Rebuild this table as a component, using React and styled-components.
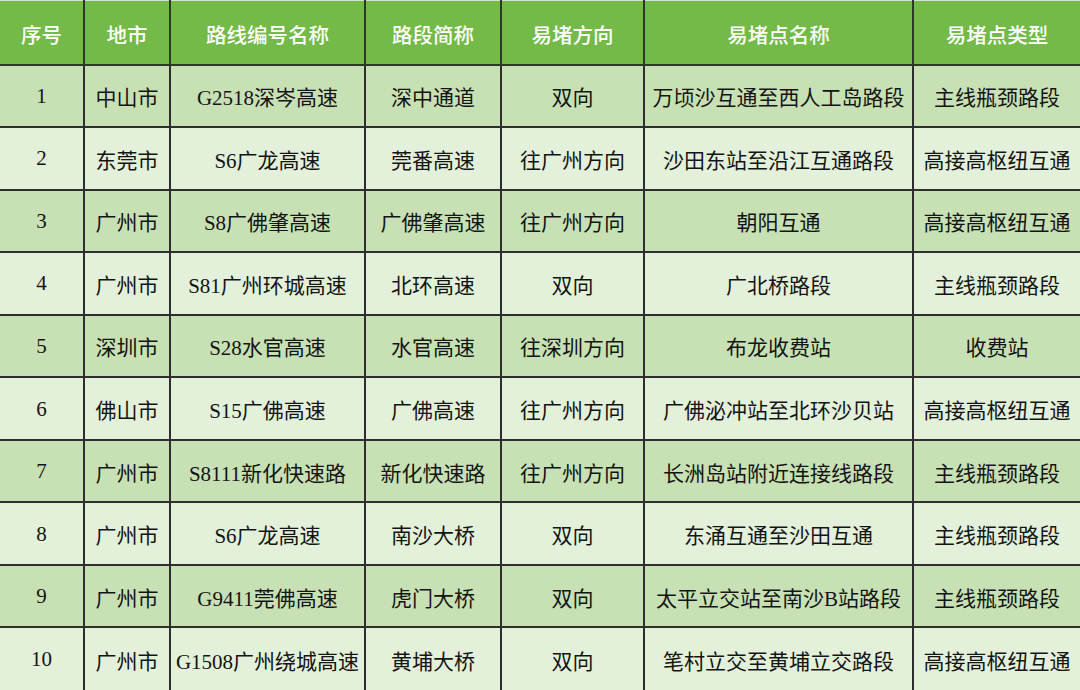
import React from "react";
import styled, { createGlobalStyle } from "styled-components";

const Global = createGlobalStyle`
  html, body { margin: 0; padding: 0; background: #ffffff; }
  body { font-family: "Liberation Serif", "Noto Sans CJK SC", serif; }
`;

const Table = styled.table`
  width: 1080px;
  height: 690px;
  table-layout: fixed;
  border-collapse: collapse;
  border-spacing: 0;
  border-top: 1px solid #d7dfd0;
  font-family: "Liberation Serif", "Noto Sans CJK SC", serif;
`;

const HeadRow = styled.tr`
  height: 64px;
  background: #73ba48;
`;

const HeadCell = styled.th`
  padding: 3px 0 0;
  color: #ffffff;
  font-size: 20.5px;
  font-weight: 500;
  text-align: center;
  vertical-align: middle;
  border-right: 2px solid #2c3a25;
  border-bottom: 2px solid #2c3a25;
  &:last-child { border-right: none; }
`;

const Row = styled.tr`
  height: 62.5px;
  background: ${(p) => (p.$odd ? "#c7e1b4" : "#e3f0da")};
  &:last-child td { border-bottom: none; }
`;

const Cell = styled.td`
  padding: 1px 0 0;
  color: #141414;
  font-size: 21px;
  text-align: center;
  vertical-align: middle;
  white-space: nowrap;
  border-right: 2px solid #2e2e2e;
  border-bottom: 2px solid #2e2e2e;
  &:last-child { border-right: none; }
`;

const widths = [84, 86, 195, 136, 143, 269, 167];
const headers = ["序号", "地市", "路线编号名称", "路段简称", "易堵方向", "易堵点名称", "易堵点类型"];

const rows = [
  ["1", "中山市", "G2518深岑高速", "深中通道", "双向", "万顷沙互通至西人工岛路段", "主线瓶颈路段"],
  ["2", "东莞市", "S6广龙高速", "莞番高速", "往广州方向", "沙田东站至沿江互通路段", "高接高枢纽互通"],
  ["3", "广州市", "S8广佛肇高速", "广佛肇高速", "往广州方向", "朝阳互通", "高接高枢纽互通"],
  ["4", "广州市", "S81广州环城高速", "北环高速", "双向", "广北桥路段", "主线瓶颈路段"],
  ["5", "深圳市", "S28水官高速", "水官高速", "往深圳方向", "布龙收费站", "收费站"],
  ["6", "佛山市", "S15广佛高速", "广佛高速", "往广州方向", "广佛泌冲站至北环沙贝站", "高接高枢纽互通"],
  ["7", "广州市", "S8111新化快速路", "新化快速路", "往广州方向", "长洲岛站附近连接线路段", "主线瓶颈路段"],
  ["8", "广州市", "S6广龙高速", "南沙大桥", "双向", "东涌互通至沙田互通", "主线瓶颈路段"],
  ["9", "广州市", "G9411莞佛高速", "虎门大桥", "双向", "太平立交站至南沙B站路段", "主线瓶颈路段"],
  ["10", "广州市", "G1508广州绕城高速", "黄埔大桥", "双向", "笔村立交至黄埔立交路段", "高接高枢纽互通"],
];

export default function App() {
  return (
    <>
      <Global />
      <Table>
        <colgroup>
          {widths.map((w, i) => (
            <col key={i} style={{ width: w }} />
          ))}
        </colgroup>
        <thead>
          <HeadRow>
            {headers.map((h) => (
              <HeadCell key={h}>{h}</HeadCell>
            ))}
          </HeadRow>
        </thead>
        <tbody>
          {rows.map((r, i) => (
            <Row key={i} $odd={i % 2 === 0}>
              {r.map((c, j) => (
                <Cell key={j}>{c}</Cell>
              ))}
            </Row>
          ))}
        </tbody>
      </Table>
    </>
  );
}
